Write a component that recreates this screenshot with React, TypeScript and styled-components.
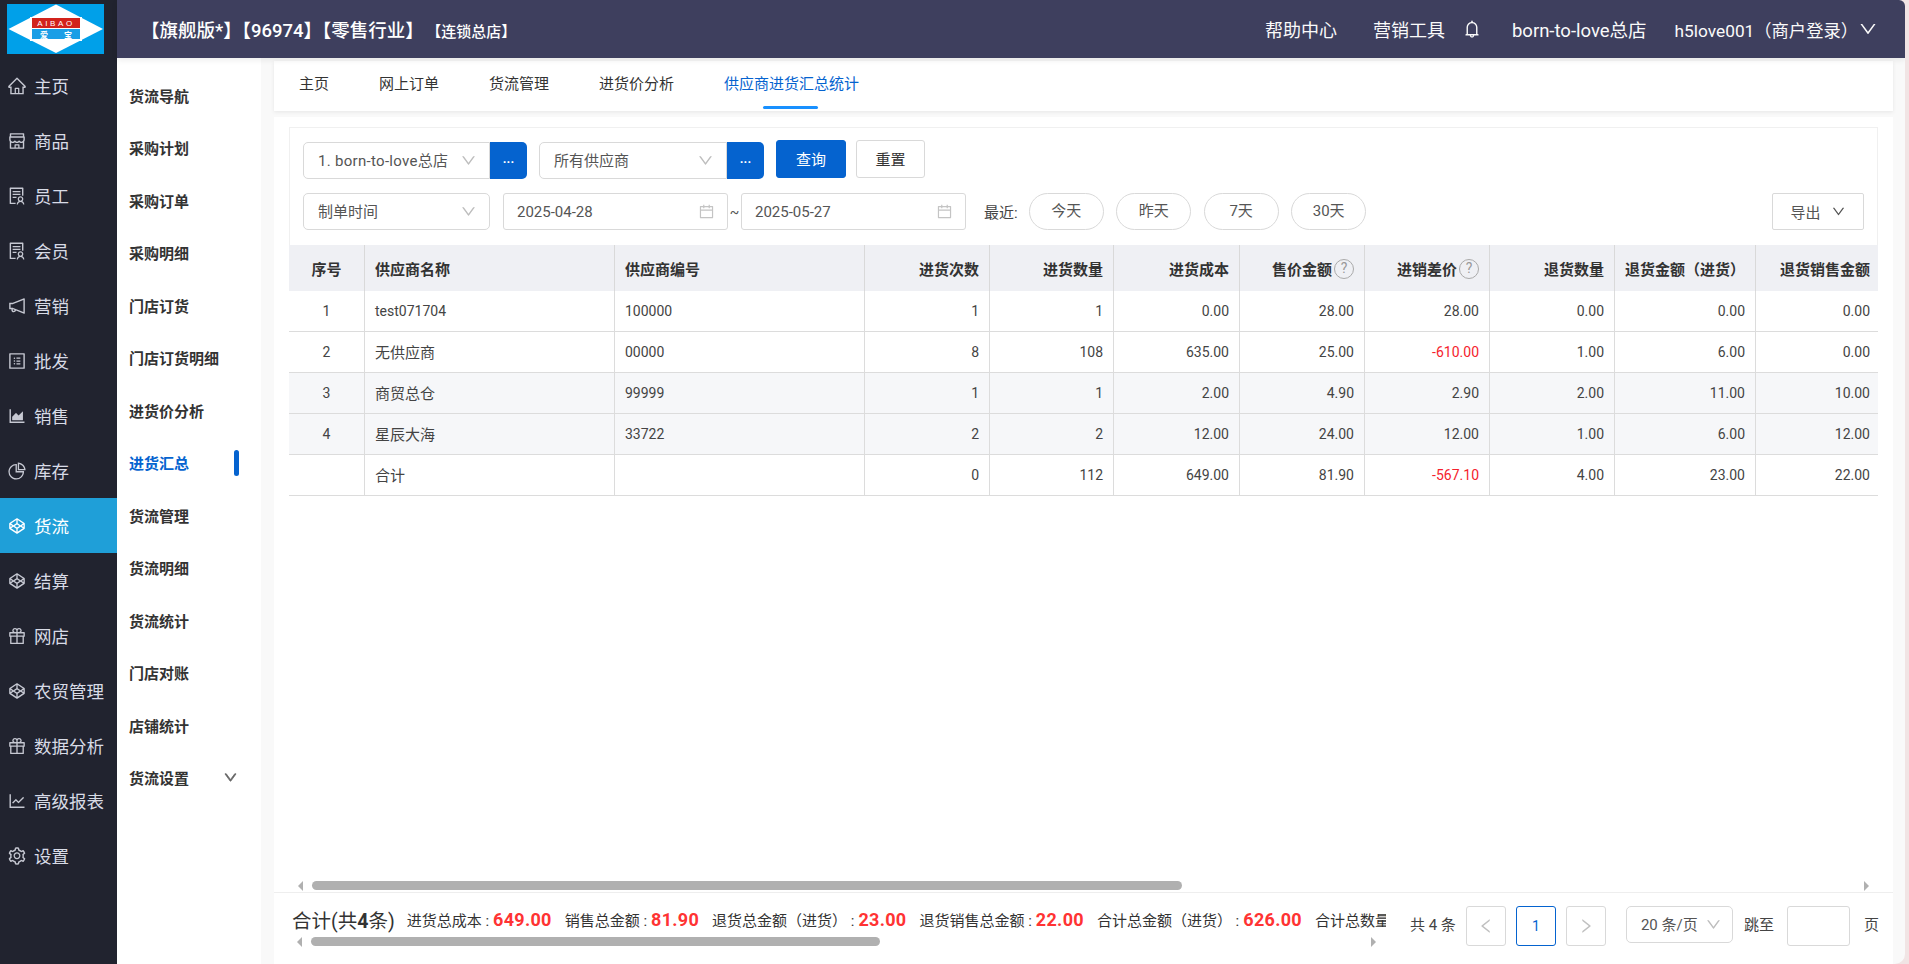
import React from "react";
import styled, { createGlobalStyle } from "styled-components";
import {
  AiOutlineHome, AiOutlineShop, AiOutlineSolution, AiOutlineNotification, AiOutlineProfile,
  AiOutlineAreaChart, AiOutlinePieChart, AiOutlineCodepen, AiOutlineGift, AiOutlineLineChart,
  AiOutlineSetting, AiOutlineBell, AiOutlineDown, AiOutlineCalendar, AiOutlineLeft, AiOutlineRight,
} from "react-icons/ai";

const FONT = `Roboto, "Noto Sans CJK SC", sans-serif`;

const Global = createGlobalStyle`
  html, body { margin: 0; height: 100%; background: #f1e4e4; overflow: hidden; }
  body { font-family: ${FONT}; color: #333; }
  * { box-sizing: border-box; }
`;

const Frame = styled.div`
  width: 1905px; height: 964px; display: grid; grid-template-columns: 117px 1fr;
  border-radius: 0 6px 10px 0; overflow: hidden; background: #f9f9f9;
`;
const Rail = styled.aside`background: #21232f; display: flex; flex-direction: column;`;
const LogoBox = styled.div`height: 58px; padding: 4px 0 0 7px;`;
const RailItem = styled.div<{ $active?: boolean }>`
  height: 55px; display: flex; align-items: center; padding-left: 7px; gap: 7px;
  font-size: 17.5px; color: ${p => (p.$active ? "#fff" : "#d8dbe6")};
  background: ${p => (p.$active ? "#1f9fd8" : "transparent")};
  svg { font-size: 20px; flex: none; color: ${p => (p.$active ? "#fff" : "#c6c8d2")}; }
`;
const Right = styled.div`display: flex; flex-direction: column; min-width: 0; height: 964px;`;
const TopBar = styled.header`
  height: 58px; flex: none; background: #3e3f5e; color: #fff; display: flex; align-items: center;
  padding: 0 27px 0 24px; box-shadow: 0 2px 6px rgba(0,0,0,.08); position: relative; z-index: 2;
`;
const Title = styled.div`font-size: 18.5px; font-weight: 500; white-space: nowrap;`;
const TitleSmall = styled.span`font-size: 15px; margin-left: 10px;`;
const TopLinks = styled.div`margin-left: auto; display: flex; align-items: center;`;
const TopLink = styled.span<{ $gap: number; $size?: number }>`
  font-size: ${p => p.$size ?? 18}px; margin-left: ${p => p.$gap}px; white-space: nowrap; color: #fafafa;
  svg { display: block; }
`;
const Body = styled.div`flex: 1; display: flex; min-height: 0;`;
const SubMenu = styled.nav`width: 144px; flex: none; background: #fff; padding-top: 11px;`;
const SubItem = styled.div<{ $active?: boolean }>`
  height: 52.5px; padding: 0 22px 0 12px; display: flex; align-items: center; justify-content: space-between;
  font-size: 15px; font-weight: 600; color: ${p => (p.$active ? "#0563cf" : "#333")};
`;
const ActiveMark = styled.i`width: 5px; height: 26px; border-radius: 3px; background: #0563cf;`;
const SubChevron = styled(AiOutlineDown)`
  font-size: 15px; margin-right: 1px; color: #666; stroke: currentColor; stroke-width: 50;
`;
const Content = styled.main`flex: 1; min-width: 0; padding: 3px 12px 0 13px; display: flex; flex-direction: column;`;
const Tabs = styled.div`
  height: 50px; flex: none; background: #fff; display: flex; gap: 50px; padding-left: 25px;
  box-shadow: 0 1px 4px rgba(0,0,0,.08); margin-bottom: 6px;
`;
const Tab = styled.div<{ $active?: boolean }>`
  position: relative; line-height: 47px; font-size: 15px; color: ${p => (p.$active ? "#0563cf" : "#333")};
  ${p => p.$active && `&::after { content: ""; position: absolute; left: 39px; width: 55px; bottom: 2px; height: 3px; background: #1890ff; border-radius: 2px; }`}
`;
const Panel = styled.section`flex: 1; min-height: 0; background: #fff; display: flex; flex-direction: column; padding-top: 10px;`;
const FilterBox = styled.div`
  height: 118px; margin: 0 15px; border: 1px solid #f0f0f0; border-bottom: 0; padding: 14px 13px 0;
  display: flex; flex-direction: column; gap: 14px;
`;
const FilterRow = styled.div`display: flex; align-items: center; height: 37px; font-size: 15px;`;
const Select = styled.div<{ $w: number; $joined?: boolean }>`
  width: ${p => p.$w}px; height: 37px; border: 1px solid #d9d9d9; background: #fff; display: flex; align-items: center;
  justify-content: space-between; padding: 0 12px 2px 14px; color: #555; font-size: 15px; white-space: nowrap;
  border-radius: ${p => (p.$joined ? "5px 0 0 5px" : "5px")};
  svg { color: #bdbdbd; font-size: 17px; flex: none; margin-top: 2px; }
`;
const LooseText = styled.span`letter-spacing: .3px;`;
const DotsButton = styled.button`
  width: 37px; height: 37px; border: 0; background: #0563cf; color: #fff; border-radius: 0 5px 5px 0;
  font: 700 13px ${FONT}; padding: 0 0 5px; margin-right: 12px;
`;
const Btn = styled.button<{ $primary?: boolean; $w: number; $ml?: number }>`
  width: ${p => p.$w}px; height: 38px; margin-left: ${p => p.$ml ?? 0}px; margin-top: -3px; border-radius: 3px;
  border: 1px solid ${p => (p.$primary ? "#0563cf" : "#d9d9d9")}; background: ${p => (p.$primary ? "#0563cf" : "#fff")};
  color: ${p => (p.$primary ? "#fff" : "#333")}; font: 15px ${FONT}; padding: 0 0 2px;
`;
const DateInput = styled.div`
  width: 225px; height: 37px; border: 1px solid #d9d9d9; border-radius: 3px; display: flex; align-items: center;
  justify-content: space-between; padding: 0 12px 0 13px; color: #555; font-size: 15px;
  svg { color: #c4c4c4; font-size: 17px; }
`;
const StartDate = styled(DateInput)`margin-left: 13px;`;
const Tilde = styled.span`width: 13px; text-align: center; font-size: 14px; color: #555;`;
const RecentLabel = styled.span`margin: 0 11px 0 18px; font-size: 15px; color: #444; white-space: nowrap;`;
const Pill = styled.div`
  width: 75px; height: 37px; border: 1px solid #d9d9d9; border-radius: 19px; margin-right: 12.5px; text-align: center;
  line-height: 35px; font-size: 15px; color: #555;
`;
const ExportBtn = styled.div`
  margin-left: auto; width: 92px; height: 37px; border: 1px solid #d9d9d9; border-radius: 2px; display: flex;
  align-items: center; justify-content: center; gap: 10px; font-size: 15px; color: #555;
  svg { font-size: 15px; }
`;
const TableWrap = styled.div`margin: 0 15px; overflow: hidden; flex: none;`;
const Table = styled.table`
  border-collapse: separate; border-spacing: 0; table-layout: fixed; width: 1592px; font-size: 14px; color: #444;
`;
const Th = styled.th<{ $align?: string }>`
  height: 46px; padding: 0 10px; background: #eff0f4; border-right: 1px solid #d9d9d9; font-size: 15px; font-weight: 600;
  color: #333; text-align: ${p => p.$align ?? "right"}; white-space: nowrap;
`;
const Td = styled.td<{ $align?: string; $red?: boolean; $shaded?: boolean }>`
  height: 41px; padding: 0 10px; border-right: 1px solid #dcdcdc; border-bottom: 1px solid #dcdcdc;
  background: ${p => (p.$shaded ? "#f6f7f9" : "#fff")}; text-align: ${p => p.$align ?? "right"};
  color: ${p => (p.$red ? "#f5222d" : "#444")}; white-space: nowrap; font-size: 14px;
`;
const CjkText = styled.span`font-size: 15px; vertical-align: 2px;`;
const Help = styled.span`
  display: inline-block; width: 20px; height: 20px; margin-left: 2px; border: 1.5px solid #aaa; border-radius: 50%;
  font-size: 14px; line-height: 17px; text-align: center; color: #999; font-weight: 400; vertical-align: 2px;
`;
const Spacer = styled.div`flex: 1;`;
const ScrollTrack = styled.div<{ $ml: number; $mr: number }>`
  height: 9px; flex: none; display: flex; align-items: center; margin: 0 ${p => p.$mr}px 0 ${p => p.$ml}px;
`;
const Arrow = styled.i<{ $dir: "left" | "right" }>`
  width: 0; height: 0; border-top: 5px solid transparent; border-bottom: 5px solid transparent; flex: none;
  ${p => (p.$dir === "left" ? "border-right: 5px solid #b0b0b0;" : "border-left: 5px solid #b0b0b0; margin-left: auto;")}
`;
const Thumb = styled.i<{ $ml: number; $w: number }>`
  height: 9px; width: ${p => p.$w}px; margin-left: ${p => p.$ml}px; background: #b0b0b0; border-radius: 5px; flex: none;
`;
const Footer = styled.footer`
  height: 72px; flex: none; margin-top: 2px; border-top: 1px solid #eee; display: flex; padding: 12px 0 0 18px;
`;
const Summary = styled.div`width: 1094px; flex: none; display: flex; flex-direction: column; gap: 4px; min-width: 0;`;
const SummaryLine = styled.div`
  height: 28px; display: flex; align-items: center; overflow: hidden; white-space: nowrap; font-size: 15px; color: #333;
`;
const SumTitle = styled.span`font-size: 19.5px; margin-right: 12px; b { font-weight: 700; }`;
const Stat = styled.span`margin-right: 13px; display: inline-flex; align-items: center;`;
const StatValue = styled.b`font: 700 18px Roboto, sans-serif; color: #ff3333; margin-left: 4px; letter-spacing: .3px;`;
const Pager = styled.div`margin-left: 24px; padding-top: 1px; display: flex; align-items: flex-start; font-size: 15px; color: #444;`;
const PagerText = styled.span<{ $ml: number; $mr: number }>`
  line-height: 38px; margin: 0 ${p => p.$mr}px 0 ${p => p.$ml}px; white-space: nowrap;
`;
const PageBtn = styled.div<{ $active?: boolean }>`
  width: 40px; height: 40px; margin-right: 10px; border: 1px solid ${p => (p.$active ? "#0563cf" : "#d9d9d9")};
  border-radius: 3px; display: flex; align-items: center; justify-content: center; font-size: 14px;
  color: ${p => (p.$active ? "#0563cf" : "#c0c0c0")};
  svg { font-size: 18px; }
`;
const SizeSelect = styled(Select)`margin-left: 10px; padding: 0 10px 2px 14px;`;
const JumpInput = styled.div`width: 63px; height: 40px; border: 1px solid #d9d9d9; border-radius: 3px; background: #fff;`;

const Logo = () => (
  <svg width="97" height="50" viewBox="0 0 97 50">
    <rect width="97" height="50" fill="#00a0e9" />
    <polygon points="1.5,25 49,0.5 96,25 49,49" fill="#fff" />
    <rect x="23" y="13" width="52" height="24" fill="#fff" />
    <rect x="25" y="14" width="48" height="10" fill="#d2231c" />
    <rect x="25" y="25" width="48" height="10" fill="#1a9ee6" />
    <text x="49" y="22" textAnchor="middle" fill="#fff" fontSize="8" letterSpacing="2.6" fontFamily="Liberation Sans">AIBAO</text>
    <text x="49" y="33.5" textAnchor="middle" fill="#fff" fontSize="8" fontWeight="700" fontFamily="Noto Sans CJK SC">爱　　宝</text>
  </svg>
);

const rail: [React.ComponentType, string][] = [
  [AiOutlineHome, "主页"], [AiOutlineShop, "商品"], [AiOutlineSolution, "员工"], [AiOutlineSolution, "会员"],
  [AiOutlineNotification, "营销"], [AiOutlineProfile, "批发"], [AiOutlineAreaChart, "销售"], [AiOutlinePieChart, "库存"],
  [AiOutlineCodepen, "货流"], [AiOutlineCodepen, "结算"], [AiOutlineGift, "网店"], [AiOutlineCodepen, "农贸管理"],
  [AiOutlineGift, "数据分析"], [AiOutlineLineChart, "高级报表"], [AiOutlineSetting, "设置"],
];
const sub = ["货流导航", "采购计划", "采购订单", "采购明细", "门店订货", "门店订货明细", "进货价分析", "进货汇总", "货流管理", "货流明细", "货流统计", "门店对账", "店铺统计", "货流设置"];
const widths = [76, 250, 250, 125, 124, 126, 125, 125, 125, 141, 125];
const heads = ["进货次数", "进货数量", "进货成本", "售价金额", "进销差价", "退货数量", "退货金额（进货）", "退货销售金额"];
const rows = [
  { no: "1", name: "test071704", code: "100000", v: ["1", "1", "0.00", "28.00", "28.00", "0.00", "0.00", "0.00"] },
  { no: "2", name: "无供应商", code: "00000", v: ["8", "108", "635.00", "25.00", "-610.00", "1.00", "6.00", "0.00"] },
  { no: "3", name: "商贸总仓", code: "99999", v: ["1", "1", "2.00", "4.90", "2.90", "2.00", "11.00", "10.00"], shaded: true },
  { no: "4", name: "星辰大海", code: "33722", v: ["2", "2", "12.00", "24.00", "12.00", "1.00", "6.00", "12.00"], shaded: true },
  { no: "", name: "合计", code: "", v: ["0", "112", "649.00", "81.90", "-567.10", "4.00", "23.00", "22.00"] },
];
const stats = [
  ["进货总成本 :", "649.00"], ["销售总金额 :", "81.90"], ["退货总金额（进货） :", "23.00"],
  ["退货销售总金额 :", "22.00"], ["合计总金额（进货） :", "626.00"], ["合计总数量 :", "112"],
];

export default function App() {
  return (
    <>
      <Global />
      <Frame>
        <Rail>
          <LogoBox><Logo /></LogoBox>
          {rail.map(([Icon, label]) => (
            <RailItem key={label} $active={label === "货流"}><Icon />{label}</RailItem>
          ))}
        </Rail>
        <Right>
          <TopBar>
            <Title>【旗舰版*】【96974】【零售行业】<TitleSmall>【连锁总店】</TitleSmall></Title>
            <TopLinks>
              <TopLink $gap={0}>帮助中心</TopLink>
              <TopLink $gap={36}>营销工具</TopLink>
              <TopLink $gap={17}><AiOutlineBell size={20} /></TopLink>
              <TopLink $gap={30} $size={18.5}>born-to-love总店</TopLink>
              <TopLink $gap={28} $size={17.3}>h5love001（商户登录）</TopLink>
              <TopLink $gap={0}><AiOutlineDown size={20} /></TopLink>
            </TopLinks>
          </TopBar>
          <Body>
            <SubMenu>
              {sub.map(s => (
                <SubItem key={s} $active={s === "进货汇总"}>
                  {s}
                  {s === "进货汇总" && <ActiveMark />}
                  {s === "货流设置" && <SubChevron />}
                </SubItem>
              ))}
            </SubMenu>
            <Content>
              <Tabs>
                <Tab>主页</Tab><Tab>网上订单</Tab><Tab>货流管理</Tab><Tab>进货价分析</Tab>
                <Tab $active>供应商进货汇总统计</Tab>
              </Tabs>
              <Panel>
                <FilterBox>
                  <FilterRow>
                    <Select $w={187} $joined><LooseText>1. born-to-love总店</LooseText><AiOutlineDown /></Select>
                    <DotsButton>...</DotsButton>
                    <Select $w={188} $joined>所有供应商<AiOutlineDown /></Select>
                    <DotsButton>...</DotsButton>
                    <Btn $primary $w={70}>查询</Btn>
                    <Btn $w={69} $ml={10}>重置</Btn>
                  </FilterRow>
                  <FilterRow>
                    <Select $w={187}>制单时间<AiOutlineDown /></Select>
                    <StartDate>2025-04-28<AiOutlineCalendar /></StartDate>
                    <Tilde>~</Tilde>
                    <DateInput>2025-05-27<AiOutlineCalendar /></DateInput>
                    <RecentLabel>最近:</RecentLabel>
                    <Pill>今天</Pill><Pill>昨天</Pill><Pill>7天</Pill><Pill>30天</Pill>
                    <ExportBtn>导出<AiOutlineDown /></ExportBtn>
                  </FilterRow>
                </FilterBox>
                <TableWrap>
                  <Table>
                    <colgroup>{widths.map((w, i) => <col key={i} width={w} />)}</colgroup>
                    <thead>
                      <tr>
                        <Th $align="center">序号</Th>
                        <Th $align="left">供应商名称</Th>
                        <Th $align="left">供应商编号</Th>
                        {heads.map(h => (
                          <Th key={h}>{h}{(h === "售价金额" || h === "进销差价") && <Help>?</Help>}</Th>
                        ))}
                      </tr>
                    </thead>
                    <tbody>
                      {rows.map(r => (
                        <tr key={r.name}>
                          <Td $align="center" $shaded={r.shaded}>{r.no}</Td>
                          <Td $align="left" $shaded={r.shaded}>{/[a-z]/.test(r.name) ? r.name : <CjkText>{r.name}</CjkText>}</Td>
                          <Td $align="left" $shaded={r.shaded}>{r.code}</Td>
                          {r.v.map((c, i) => (
                            <Td key={i} $shaded={r.shaded} $red={c.startsWith("-")}>{c}</Td>
                          ))}
                        </tr>
                      ))}
                    </tbody>
                  </Table>
                </TableWrap>
                <Spacer />
                <ScrollTrack $ml={24} $mr={24}>
                  <Arrow $dir="left" /><Thumb $ml={9} $w={870} /><Arrow $dir="right" />
                </ScrollTrack>
                <Footer>
                  <Summary>
                    <SummaryLine>
                      <SumTitle>合计(共<b>4</b>条)</SumTitle>
                      {stats.map(([k, v]) => <Stat key={k}>{k}<StatValue>{v}</StatValue></Stat>)}
                    </SummaryLine>
                    <ScrollTrack $ml={5} $mr={10}>
                      <Arrow $dir="left" /><Thumb $ml={9} $w={569} /><Arrow $dir="right" />
                    </ScrollTrack>
                  </Summary>
                  <Pager>
                    <PagerText $ml={0} $mr={10}>共 4 条</PagerText>
                    <PageBtn><AiOutlineLeft /></PageBtn>
                    <PageBtn $active>1</PageBtn>
                    <PageBtn><AiOutlineRight /></PageBtn>
                    <SizeSelect $w={107}>20 条/页<AiOutlineDown /></SizeSelect>
                    <PagerText $ml={11} $mr={13}>跳至</PagerText>
                    <JumpInput />
                    <PagerText $ml={14} $mr={0}>页</PagerText>
                  </Pager>
                </Footer>
              </Panel>
            </Content>
          </Body>
        </Right>
      </Frame>
    </>
  );
}
